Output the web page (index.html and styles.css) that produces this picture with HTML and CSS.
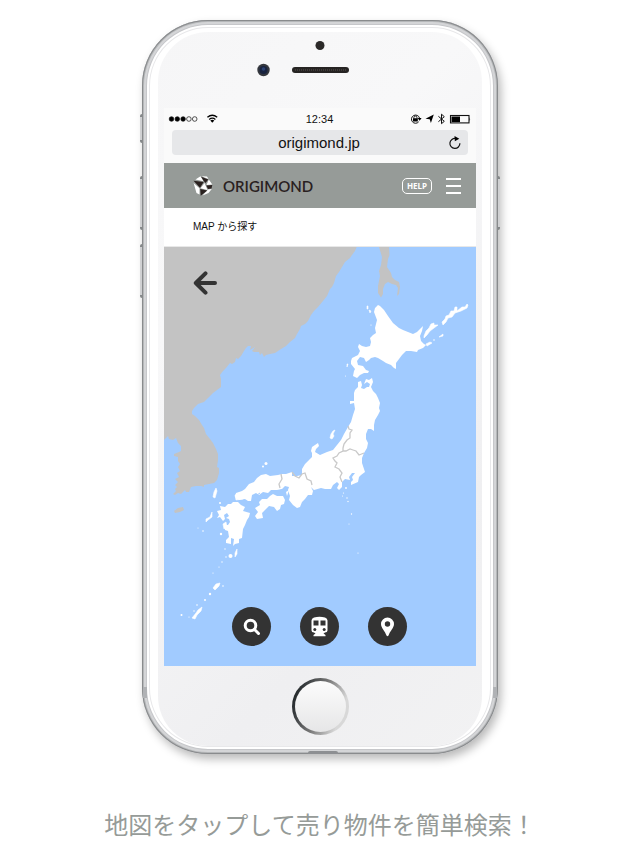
FILE: index.html
```html
<!DOCTYPE html>
<html lang="ja">
<head>
<meta charset="utf-8">
<meta name="viewport" content="width=device-width, initial-scale=1">
<title>ORIGIMOND</title>
<link rel="stylesheet" href="styles.css">
</head>
<body>
<main class="promo">
  <div class="device">
    <span class="key key-mute"></span>
    <span class="key key-up"></span>
    <span class="key key-down"></span>
    <span class="key key-power"></span>
    <span class="antenna antenna-left"></span>
    <span class="antenna antenna-right"></span>
    <span class="port"></span>
    <div class="face">
      <div class="face-top">
        <svg width="126" height="48" viewBox="257 32 126 48" aria-hidden="true">
          <circle cx="320" cy="45.500" r="4.500" fill="#2b2928"/>
          <circle cx="263.500" cy="70" r="6.200" fill="#34373d"/>
          <circle cx="263.500" cy="70" r="4" fill="#18233f"/>
          <circle cx="263.500" cy="69" r="1.800" fill="#2c4272"/>
          <rect x="292" y="67" width="57" height="6" rx="3" fill="#262423"/>
          <path d="M295 70H346" stroke="#403c3a" stroke-width="2" stroke-dasharray="1 1"/>
        </svg>
      </div>
      <div class="screen">
        <div class="status">
          <div class="status-side">
            <svg width="50" height="12" viewBox="168 113 50 12" aria-hidden="true">
              <g stroke="#111" stroke-width=".7"><circle cx="171.500" cy="119" r="2.300"/><circle cx="177.300" cy="119" r="2.300"/><circle cx="183.100" cy="119" r="2.300"/><circle cx="188.900" cy="119" r="2.300" fill="none"/><circle cx="194.700" cy="119" r="2.300" fill="none"/></g>
              <path d="M207.400 117.300Q212.300 113.200 217.200 117.300M209.200 119.400Q212.300 116.900 215.400 119.400" fill="none" stroke="#000" stroke-width="1.300"/>
              <path d="M210.300 120.400Q212.300 119 214.300 120.400L212.300 122.800Z"/>
            </svg>
          </div>
          <span class="time">12:34</span>
          <div class="status-side status-right">
            <svg width="61" height="12" viewBox="410 113 61 12" aria-hidden="true">
              <g fill="none" stroke="#111">
                <path d="M418.700 121.800A4.100 4.100 0 1 1 419.500 118" stroke-width="1"/>
                <path d="M413.900 118.500V117.500A1.500 1.500 0 0 1 416.900 117.500V118.500" stroke-width=".9"/>
                <path d="M438.400 116.300L444.300 121.300 441.500 123.700V114.200L444.300 116.700 438.400 121.700" stroke-width="1"/>
                <rect x="450.500" y="115.500" width="18.500" height="7.400" stroke-width="1.100"/>
              </g>
              <path d="M413 118.300H417.800V121.500H413ZM417.700 118H421.600L419.600 120.800ZM433.800 114.500L430.900 123 429.700 119.200 425.500 118.800ZM451.500 116.500H460V122H451.500ZM469.500 117.200Q470.800 119 469.500 121.200Z"/>
            </svg>
          </div>
        </div>
        <div class="address">
          <span class="address-text">origimond.jp</span>
          <button class="plain reload" type="button" aria-label="再読み込み">
            <svg width="14" height="14" viewBox="448 136 14 14" aria-hidden="true"><path d="M455.800 138.500A5 5 0 1 0 459.900 143.300" fill="none" stroke="#111" stroke-width="1.200"/><path d="M454.500 136L459.300 138.800 454.800 141.200Z"/></svg>
          </button>
        </div>
        <header class="site-header">
          <a class="brand" href="#">
            <svg class="brand-mark" width="20" height="20" viewBox="193 176 20 20" aria-hidden="true">
              <path d="M195.500 179.500L200.500 176.200 203.500 181.200ZM201.500 176.200L207 176.500 208.500 179ZM208.800 179.500L212.300 184.500 206.500 185ZM204.500 183L207.500 190 200.500 188.300ZM193.600 183L199.500 188.300 199.500 194.500 196.500 193ZM208 189.500L211.800 189 208.500 193 202.500 195.500Z" fill="#fff"/>
              <path d="M201.200 176.800L208.300 179.500 205.500 183 203.700 181ZM193.500 180.800L203.700 182 200 187.700ZM206.300 185.500L212.300 185 211.500 188.500 208 189ZM200.200 189L207.300 190.500 200.700 195.800Z" fill="#2a211f"/>
            </svg>
            <span>ORIGIMOND</span>
          </a>
          <div class="header-tools">
            <button class="help" type="button">HELP</button>
            <button class="plain burger" type="button" aria-label="メニュー"><span></span><span></span><span></span></button>
          </div>
        </header>
        <h1 class="page-title">MAP から探す</h1>
        <div class="map">
          <svg class="map-art" viewBox="164 247 312 419" role="img" aria-label="日本地図">
            <g fill="#c3c3c3">
              <path d="M164 247H356.700L355 251 352 255 350 258 345 262 342 267 339 272 336 276 334 283 332 287 330 289 327 296 323 301 318 307 314 311 311 315 308 321 305 324 301 326 300 329 297 334 295 338 290 342 286 346 281 349 278 351 275 353 270 354 266 355 264 357 262 353 260 355 259 352 254 352 252 351 255 347 250 350 251 346 248 346 246 348 244 351 241 356 238 359 236 358 235 362 232 364 230 363 226 368 223 371 220 375 221 379 221 387 217 390 213 393 208 398 204 402 198 404 194 408 192 411 192 414 195 416 199 420 202 425 204 428 206 434 210 439 213 443 216 449 218 454 218 460 217 467 219 468 219 473 217 480 214 483 209 484 204 485 204 487 201 486 196 486 191 487 189 492 186 492 185 490 181 494 178 493 175 495 173 494 176 491 175 489 177 487 175 485 178 482 175 479 179 477 177 473 180 471 178 467 180 464 178 461 178 457 174 456 174 454 179 452 181 451 181 446 178 443 176 438 173 440 169 439 168 436 166 438 164 440Z"/>
              <path d="M174 511L178 508 183 507 184 510 180 512 175 513Z"/>
              <path d="M379 247L382 257 381 265 379 271 380 276 378 286 378 293 381 297.500 383 294 383 289 385 284 388 282 392 284 396 285 398 288 397 296 399 294 400 287 399 282 395 280 392 277 391 273 387 267 388 259 389.500 255 389 247Z"/>
            </g>
            <g fill="#fff">
              <path d="M378 305L380 306 384 310 388 316 393 323 399 328 403 330 408 332 413 334 417 332 419 330 423 326 422 331 420 336 421 341 424 344 426 345 423 348 418 350 417 352 411 351 406 351 402 355 399 359 396 363 396 369 394 368 391 365 386 363 383 361 378 358 375 357 371 358 369 360 366 362 364 358 360 357 357 361 358 365 363 366 366 370 369 371 368 373 364 373 360 375 357 378 353 376 354 371 355 369 351 364 351 361 352 358 358 355 360 351 358 347 359 344 362 346 366 347 370 346 371 342 370 338 373 335 376 333 375 328 377 320 374 312 375 308Z"/>
              <path d="M358 382L361 381 362 385 361 388 364 389 367 387 369 387 370 384 367 382 364 384 366 379 369 380 372 378 373 382 371 387 373 391 376 394 378 398 380 403 379 408 380 411 378 415 375 420 374 425 374 431 371 429 368 429 366 434 366 439 368 443 367 448 364 453 362 458 362 463 364 469 365 472 361 475 359 477 358 482 351 485 351 482 353 480 352 477 355 473 352 473 349 477 350 480 345 479 342 482 342 487 339 490 337 488 339 484 337 482 333 485 331 489 325 489 321 488 314 490 311 487 313 491 312 495 308 495 305 499 302 502 300 507 297 508 293 505 289 500 290 496 288 490 289 487 285 486 282 489 277 490 271 490 268 493 263 492 259 495 256 493 252 495 251 501 248 501 245 499 239 500 235 497 236 493 242 491 245 489 249 484 254 482 257 478 261 475 266 474 270 476 278 475 282 474 286 474 292 472 292 476 297 476 302 475 302 469 305 464 310 459 312 457 312 453 311 451 312 447 318 443 319 446 316 449 315 452 320 455 327 452 333 450 337 445 341 440 344 434 348 427 351 422 353 415 355 409 354 403 350 404 350 401 354 401 354 393 355 390 358 387Z"/>
              <path d="M255 508L260 505 259 502 262 499 267 499 270 496 273 494 277 496 283 496 285 500 284 504 281 505 280 509 277 511 274 507 269 506 265 510 262 513 263 518 257 519 255 516 258 512Z"/>
              <path d="M286 492L289 490 287 496Z"/>
              <path d="M217 511L221 510 220 506 225 507 228 504 231 504 233 502 238 502 241 505 245 507 243 511 250 513 249 517 247 520 245 525 243 529 242 538 239 539 239 543 235 544 233 546 234 539 231 538 231 544 226 543 226 540 229 537 228 531 225 530 225 525 228 525 230 522 229 519 226 518 229 516 227 513 224 515 225 519 223 521 220 517 217 518 219 515Z"/>
              <path d="M235 495L240 493 243 499 236 500ZM216 488L217 491 215 498 213 497 214 492ZM212 512L212 517 208 520 206 522 206 519 210 517ZM223 524L226 522 227 527 224 529ZM333 431L335 430 333 434 334 436 332 439 330 438 331 434ZM237 549L237 554 235 557 235 553ZM213 588L216 584 220 583 219 586 215 590ZM202 607L201 611 197 615 195 619 192 618 196 613 198 610ZM367 306L368 306 368 309 367 309ZM369 310L371 311 370 313ZM347 364L348 364 347 367ZM424 336L426 331 429 328 431 324 434 323 434 325 438 325 434 328 430 331 427 335 424 338ZM442 322L445 319 446 316 449 315 451 311 454 311 455 307 457 307 457 311 462 307 465 307 467 304 468 305 467 308 461 311 455 313 452 317 448 318 446 322 443 325ZM426 344L430 342 432 343 427 346ZM439 337L443 334 443 336Z" stroke="#fff" stroke-width=".6"/>
              <circle cx="266" cy="463.500" r="1.500"/><circle cx="263" cy="466.500" r="1"/><circle cx="230.500" cy="556" r="2"/><circle cx="226" cy="557" r=".7"/><circle cx="225" cy="549" r=".7"/><circle cx="220" cy="503" r="1"/><circle cx="221" cy="534" r="1.200"/><circle cx="203" cy="531" r=".8"/><circle cx="198" cy="528" r=".5"/><circle cx="219" cy="567" r=".6"/><circle cx="222" cy="562" r=".7"/><circle cx="213" cy="573" r=".6"/><circle cx="223" cy="586" r=".8"/><circle cx="210" cy="594" r="1.200"/><circle cx="205" cy="600" r="1"/><circle cx="197" cy="605" r=".8"/><circle cx="194" cy="611" r=".7"/><circle cx="189" cy="617" r=".6"/><circle cx="181.500" cy="615" r="1"/><circle cx="346" cy="488" r=".9"/><circle cx="343.500" cy="493" r=".6"/><circle cx="342.500" cy="496" r=".5"/><circle cx="347" cy="498" r=".7"/><circle cx="348" cy="501.500" r=".7"/><circle cx="351.500" cy="514" r=".7"/><circle cx="349" cy="524" r=".5"/><circle cx="358" cy="553" r=".6"/><circle cx="434" cy="340" r=".8"/><circle cx="371" cy="325" r=".6"/><circle cx="345.500" cy="376" r=".5"/>
            </g>
            <path d="M348 426L349 429 352 430 350 433 350 438 347 440 344 444 343 448 343 451 339 453 337 456 333 458 335 461 337 463 335 467 339 469 342 473 340 477 342 482M343 451L346 451 350 449 353 450 356 451 359 455 364 453M281 474L282 479 279 484 280 488M292 472L295 476 299 478 302 474 305 473 307 479 311 481 312 485" fill="none" stroke="#c9c9c9" stroke-width="1.300"/>
            <path d="M257 495L260 493M271 493L274 491M278 491L285 489" stroke="#a1cbff" fill="none"/>
          </svg>
          <button class="plain back" type="button" aria-label="戻る">
            <svg width="24" height="24" viewBox="193 271 24 24" aria-hidden="true"><path d="M215 283H196M205.500 273.300L195.800 283 205.500 292.700" fill="none" stroke="#333" stroke-width="4" stroke-linecap="round" stroke-linejoin="round"/></svg>
          </button>
          <nav class="actions">
            <button class="round" type="button" aria-label="検索">
              <svg width="39" height="39" viewBox="0 0 39 39" aria-hidden="true"><circle cx="18.500" cy="18.500" r="5.300" fill="none" stroke="#fff" stroke-width="3"/><path d="M22.500 22.500L26.500 26.500" stroke="#fff" stroke-width="3" stroke-linecap="round"/></svg>
            </button>
            <button class="round" type="button" aria-label="路線">
              <svg width="39" height="39" viewBox="0 0 39 39" aria-hidden="true"><path d="M14 10.500Q19.500 9 25 10.500 27.500 11.500 27.500 13.500V23.500Q27.500 25.500 25 25.500L23.500 26.500 25.500 28V29.300H13.500V28L15.500 26.500 14 25.500Q11.500 25.500 11.500 23.500V13.500Q11.500 11.500 14 10.500Z" fill="#fff"/><path d="M13.500 13.500H18.500V18.500H13.500ZM20.500 13.500H25.500V18.500H20.500Z" fill="#333"/><circle cx="14.800" cy="22.500" r="1.500" fill="#333"/><circle cx="24.200" cy="22.500" r="1.500" fill="#333"/></svg>
            </button>
            <button class="round" type="button" aria-label="現在地">
              <svg width="39" height="39" viewBox="0 0 39 39" aria-hidden="true"><path d="M19.500 10.500A6.500 6.500 0 0 0 13 17C13 21 17 24 18.500 28.500Q19.500 30 20.500 28.500C22 24 26 21 26 17A6.500 6.500 0 0 0 19.500 10.500ZM19.500 14.300A2.700 2.700 0 1 1 19.500 19.700A2.700 2.700 0 1 1 19.500 14.300Z" fill="#fff" fill-rule="evenodd"/></svg>
            </button>
          </nav>
        </div>
      </div>
      <div class="face-bottom"><div class="home"></div></div>
    </div>
  </div>
  <p class="caption">地図をタップして売り物件を簡単検索！</p>
</main>
</body>
</html>
```
FILE: styles.css
```css
* { box-sizing: border-box; }

body {
  margin: 0;
  background: #fff;
  color: #111;
  font-family: "Liberation Sans", "Noto Sans CJK JP", sans-serif;
}

button { font: inherit; cursor: pointer; }

.plain {
  display: flex;
  padding: 0;
  border: 0;
  background: none;
}

.promo {
  display: flex;
  flex-direction: column;
  align-items: center;
  padding-top: 20px;
}

.device {
  position: relative;
  width: 100%;
  max-width: 356px;
  padding: 12px 16px 8px;
  border-radius: 66px;
  background: #fff;
  box-shadow:
    inset 0 0 0 1px #898b8d,
    inset 0 0 0 2px #b5b7b9,
    inset 0 0 0 4px #d4d5d7,
    inset 0 0 0 5px #c6c7ca,
    inset 0 0 0 7px #fff,
    inset 0 0 0 8px #e8e8ea,
    3px 5px 10px rgba(0, 0, 0, .28);
}

.key {
  position: absolute;
  left: -2px;
  width: 2px;
  border-radius: 2px 0 0 2px;
  background: #d0d1d3;
  border-block: 3px solid #85888a;
}
.key-mute { top: 94px; height: 29px; }
.key-up { top: 156px; height: 54px; }
.key-down { top: 224px; height: 54px; }
.key-power {
  top: 156px;
  right: -2px;
  left: auto;
  height: 54px;
  border-radius: 0 2px 2px 0;
}

.antenna {
  position: absolute;
  bottom: 56px;
  width: 4px;
  height: 11px;
  background: #b0b2b5;
}
.antenna-left { left: 1px; }
.antenna-right { right: 1px; }

.port {
  position: absolute;
  bottom: 0;
  left: 50%;
  width: 30px;
  height: 3px;
  margin-left: -12px;
  border-radius: 2px 2px 0 0;
  background: #8d8f92;
}

.face {
  padding: 0 6px;
  border-radius: 50px;
  background: linear-gradient(135deg, #f6f6f7, #f8f8f9 30%, #efeff1 75%, #f2f2f3);
}

.face-top { display: flex; justify-content: center; height: 76px; }

.screen { background: #fafafa; }

.status {
  display: flex;
  align-items: center;
  height: 22px;
  padding: 0 5px 0 4px;
}
.status-side { display: flex; flex: 1; }
.status-right { justify-content: flex-end; }
.time { font-size: 11px; line-height: 12px; }

.address {
  display: flex;
  align-items: center;
  height: 25px;
  margin: 0 8px 8px;
  padding: 0 6px 0 18px;
  border-radius: 4px;
  background: #e6e7e9;
}
.address-text { flex: 1; font-size: 15px; line-height: 20px; text-align: center; }

.site-header {
  display: flex;
  align-items: center;
  justify-content: space-between;
  height: 45px;
  padding: 0 15px 0 29px;
  background: #969b98;
}
.brand {
  display: flex;
  align-items: center;
  gap: 10px;
  color: #2a211f;
  font-family: Lato, sans-serif;
  font-size: 15px;
  font-weight: 600;
  text-decoration: none;
}
.header-tools { display: flex; align-items: center; gap: 14px; }
.help {
  width: 30px;
  height: 16px;
  padding: 0;
  border: 1px solid #fff;
  border-radius: 5px;
  background: none;
  color: #fff;
  font-family: "Noto Sans", sans-serif;
  font-size: 8px;
  font-weight: 700;
  line-height: 12px;
}
.burger { flex-direction: column; gap: 5px; width: 15px; }
.burger span { width: 100%; height: 2px; background: #fff; }

.page-title {
  margin: 0;
  padding: 0 29px;
  border-bottom: 1px solid #e8e8e8;
  background: #fff;
  font-size: 10px;
  font-weight: 400;
  line-height: 38px;
}

.map { position: relative; background: #a1cbff; }
.map-art { display: block; width: 100%; height: auto; }
.back { position: absolute; top: 24px; left: 29px; }
.actions {
  position: absolute;
  right: 0;
  bottom: 20px;
  left: 0;
  display: flex;
  justify-content: center;
  gap: 29px;
  padding-right: 2px;
}
.round {
  display: flex;
  width: 39px;
  height: 39px;
  padding: 0;
  border: 0;
  border-radius: 50%;
  background: #333;
}

.face-bottom { display: flex; justify-content: center; height: 80px; padding-top: 12px; }
.home {
  width: 57px;
  height: 57px;
  border: 3px solid transparent;
  border-radius: 50%;
  background:
    linear-gradient(#fcfcfc, #e6e6e7) padding-box,
    linear-gradient(110deg, #22272a 10%, #777 48%, #d8d8d8 80%) border-box;
}

.caption {
  margin: 52px 0 0;
  color: #969b98;
  font-family: "Noto Sans CJK JP", sans-serif;
  font-size: 24px;
  font-weight: 400;
  line-height: 36px;
  text-align: center;
}
```
